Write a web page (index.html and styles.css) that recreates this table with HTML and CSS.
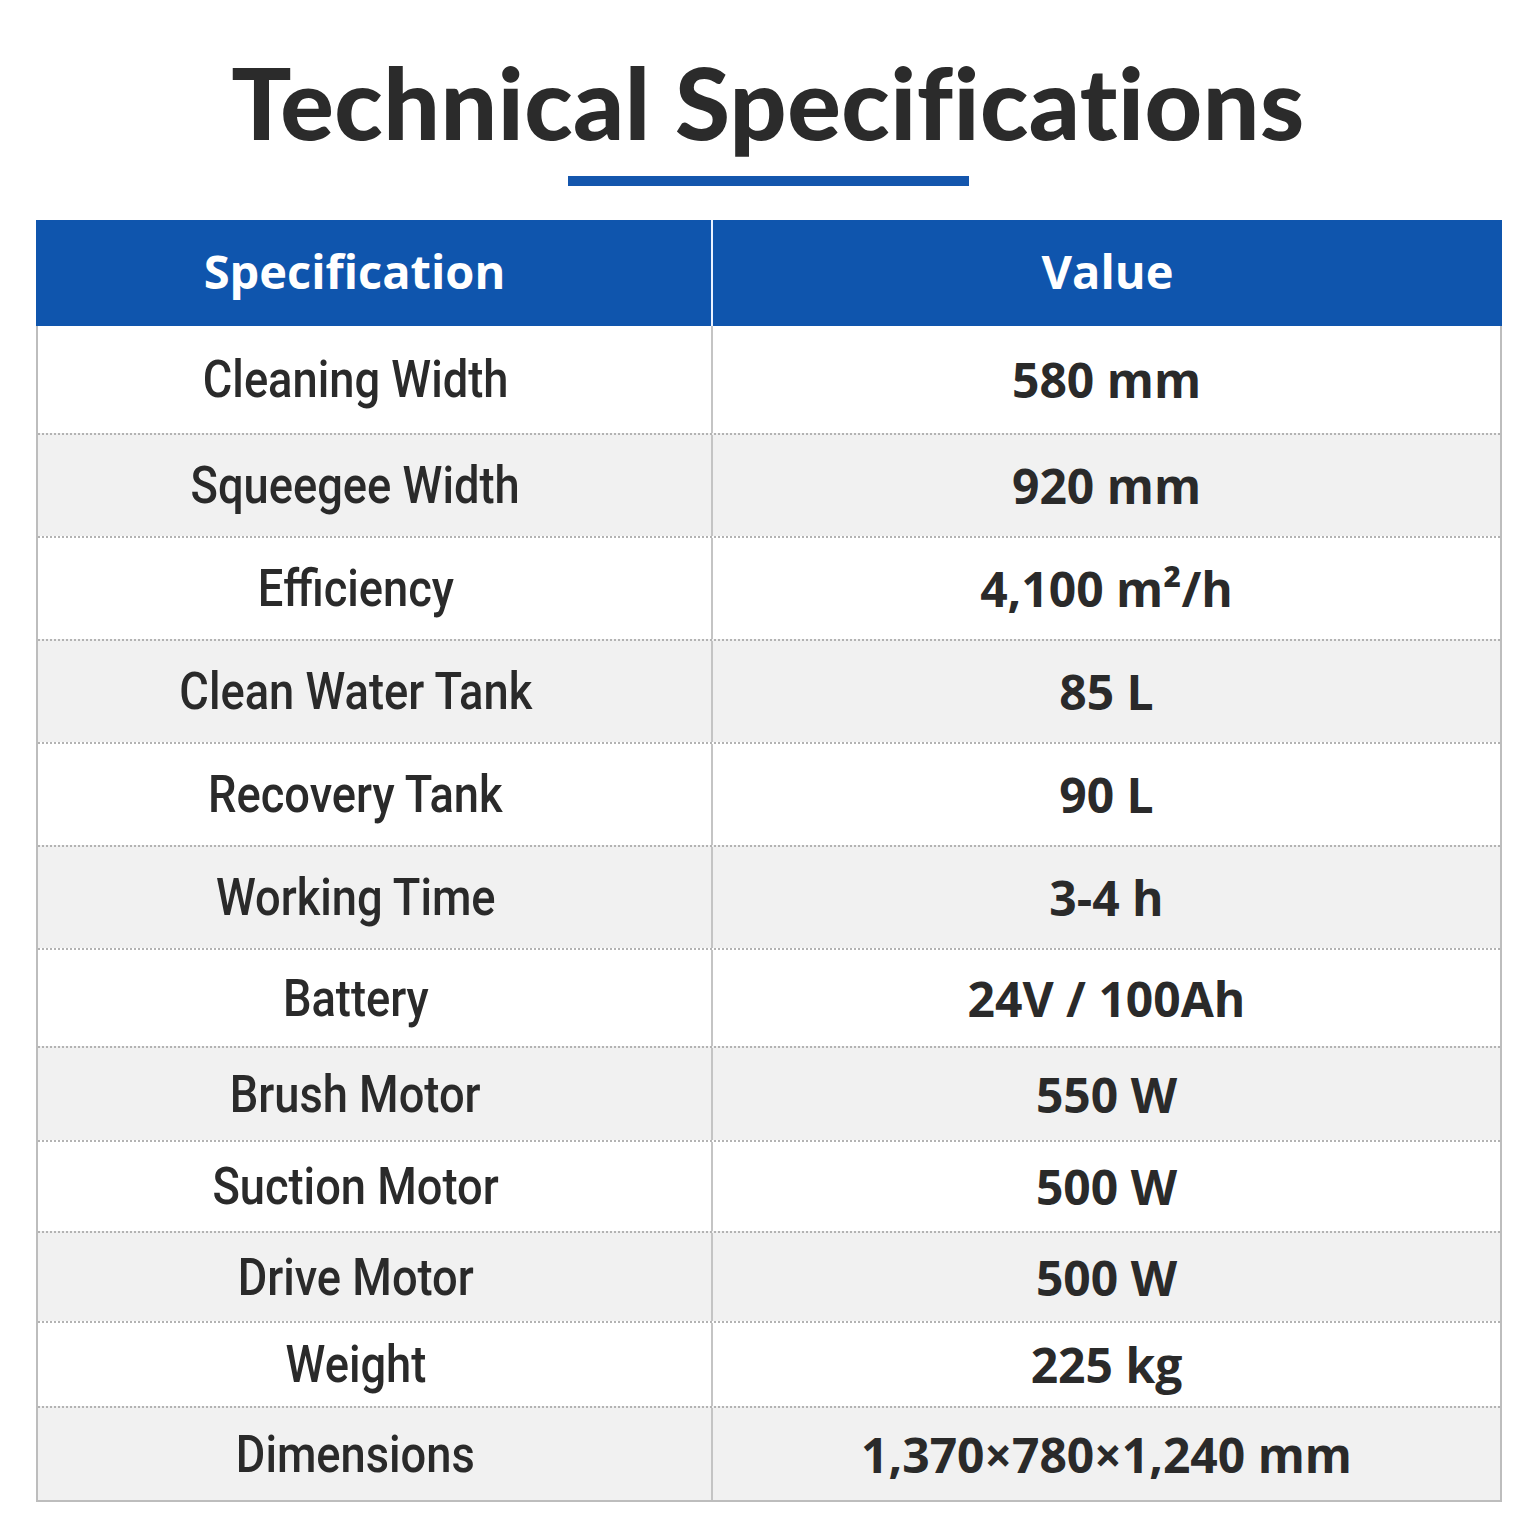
FILE: index.html
```html
<!DOCTYPE html>
<html>
<head>
<meta charset="utf-8">
<link rel="stylesheet" href="styles.css">
</head>
<body>
<div class="page">
  <h1 class="title">Technical Specifications</h1>
  <div class="rule"></div>
  <div class="table">
    <div class="head">
      <div class="hcell hk">Specification</div>
      <div class="hcell">Value</div>
    </div>
    <div class="row"><div class="k"><span>Cleaning Width</span></div><div class="v">580 mm</div></div>
    <div class="row"><div class="k"><span>Squeegee Width</span></div><div class="v">920 mm</div></div>
    <div class="row"><div class="k"><span>Efficiency</span></div><div class="v">4,100 m²/h</div></div>
    <div class="row"><div class="k"><span>Clean Water Tank</span></div><div class="v">85 L</div></div>
    <div class="row"><div class="k"><span>Recovery Tank</span></div><div class="v">90 L</div></div>
    <div class="row"><div class="k"><span>Working Time</span></div><div class="v">3-4 h</div></div>
    <div class="row"><div class="k"><span>Battery</span></div><div class="v">24V / 100Ah</div></div>
    <div class="row"><div class="k"><span>Brush Motor</span></div><div class="v">550 W</div></div>
    <div class="row"><div class="k"><span>Suction Motor</span></div><div class="v">500 W</div></div>
    <div class="row"><div class="k"><span>Drive Motor</span></div><div class="v">500 W</div></div>
    <div class="row"><div class="k"><span>Weight</span></div><div class="v">225 kg</div></div>
    <div class="row"><div class="k"><span>Dimensions</span></div><div class="v">1,370×780×1,240 mm</div></div>
  </div>
</div>
</body>
</html>
```

FILE: styles.css
```css
* { box-sizing: border-box; }
html, body { margin: 0; padding: 0; background: #fff; }
.page {
  width: 1536px;
  height: 1536px;
  display: flex;
  flex-direction: column;
  align-items: center;
  padding-top: 41px;
}
.title {
  margin: 0;
  font-family: Lato, sans-serif;
  font-weight: 900;
  font-size: 100px;
  line-height: 120px;
  color: #2b2b2b;
  letter-spacing: 0.5px;
  font-variant-ligatures: none;
}
.rule {
  width: 401px;
  height: 10px;
  background: #1456ad;
  margin-top: 15px;
}
.table {
  margin-top: 34px;
  width: 1466px;
  margin-left: 2px;
  border-left: 2px solid #bdbdbd;
  border-right: 2px solid #bdbdbd;
  border-bottom: 2px solid #bdbdbd;
  display: flex;
  flex-direction: column;
}
.head {
  display: grid;
  grid-template-columns: 677px 1fr;
  height: 106px;
  background: #0f55ad;
  margin: 0 -2px;
}
.hcell {
  display: flex;
  align-items: center;
  justify-content: center;
  color: #fff;
  font-family: "Open Sans", sans-serif;
  font-weight: 700;
  font-size: 47px;
  padding-bottom: 4px;
}
.hk { border-right: 2px solid #eaf2ff; padding-right: 38px; }
.row {
  display: grid;
  grid-template-columns: 675px 1fr;
  border-top: 2px dotted #b3b3b3;
  background: #fff;
}
.head + .row { border-top: none; }
.row:nth-child(odd) { background: #f1f1f1; }
.k, .v {
  display: flex;
  align-items: center;
  justify-content: center;
  color: #2a2a2a;
}
.k {
  border-right: 2px solid #c4c4c4;
  font-family: Roboto, sans-serif;
  font-weight: 500;
  font-size: 52px;
  padding-right: 38px;
}
.k span {
  display: inline-block;
  transform: scaleX(0.87);
  white-space: nowrap;
}
.v {
  font-family: "Open Sans", sans-serif;
  font-weight: 700;
  font-size: 48px;
}
.row:nth-child(2) { height: 107px; }
.row:nth-child(3) { height: 103px; }
.row:nth-child(4) { height: 103px; }
.row:nth-child(5) { height: 103px; }
.row:nth-child(6) { height: 103px; }
.row:nth-child(7) { height: 103px; }
.row:nth-child(8) { height: 98px; }
.row:nth-child(9) { height: 94px; }
.row:nth-child(10) { height: 91px; }
.row:nth-child(11) { height: 90px; }
.row:nth-child(12) { height: 85px; }
.row:nth-child(13) { height: 94px; }
```
